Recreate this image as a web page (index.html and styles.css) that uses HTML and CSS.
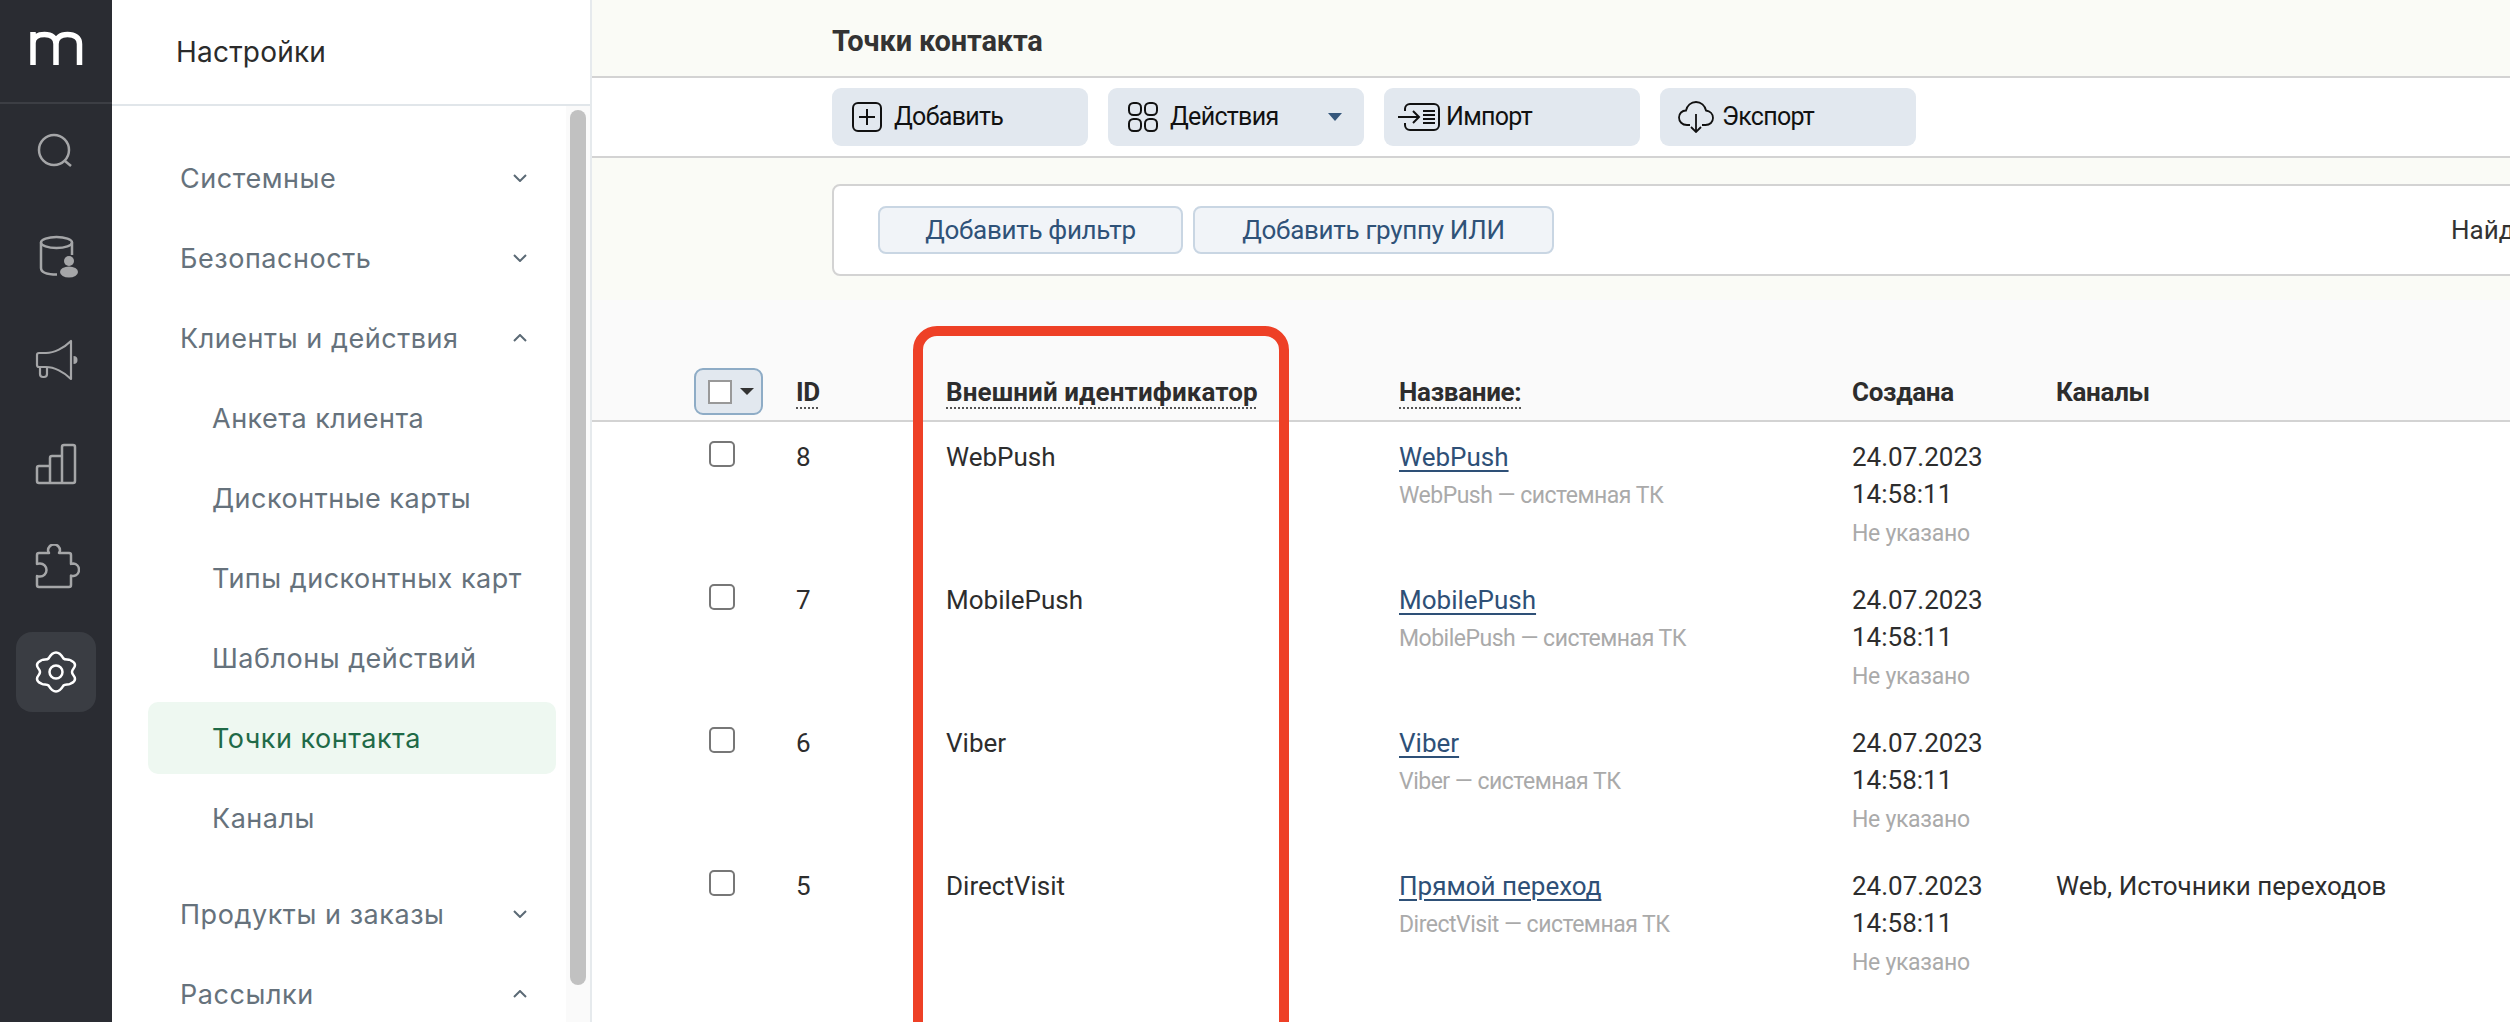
FILE: index.html
```html
<!DOCTYPE html>
<html lang="en">
<head>
    <meta charset="UTF-8">
    <meta name="viewport" content="width=device-width, initial-scale=1.0">
    <title>Точки контакта</title>
    <link rel="stylesheet" href="styles.css">
</head>
<body>
    <div class="app">
        <nav class="rail">
            <div class="rail-logo">
                <svg width="56" height="38" viewBox="0 0 56 38" fill="none" stroke="#fff" stroke-width="5.500">
                    <path d="M5 36V3M5 14C5 8 10 5.500 16.500 5.500C24 5.500 28 9 28 15V36M28 15C28 9 32 5.500 39.500 5.500C47 5.500 51.500 9 51.500 15V36"/>
                </svg>
            </div>
            <div class="rail-items">
                <div class="rail-item">
                    <svg width="48" height="48" viewBox="0 0 48 48" fill="none" stroke="#a5a6a8" stroke-width="2.500">
                        <circle cx="22" cy="22" r="15"/>
                        <path d="M33 33L39 38"/>
                    </svg>
                </div>
                <div class="rail-item">
                    <svg width="48" height="48" viewBox="0 0 48 48" fill="none" stroke="#a5a6a8" stroke-width="2.500">
                        <ellipse cx="24.500" cy="10.500" rx="15.500" ry="5.500"/>
                        <path d="M9 10.500V36C9 40 14 42.500 25 42.500M40 10.500V23"/>
                        <circle cx="37" cy="29" r="5" fill="#a5a6a8" stroke="none"/>
                        <ellipse cx="37" cy="40" rx="9" ry="5.500" fill="#a5a6a8" stroke="none"/>
                    </svg>
                </div>
                <div class="rail-item">
                    <svg width="48" height="48" viewBox="0 0 48 48" fill="none" stroke="#a5a6a8" stroke-width="2.200" stroke-linejoin="round">
                        <path d="M7 17H14C22 17 32 12 39 5V43C32 36 22 31 14 31H7A2 2 0 0 1 5 29V19A2 2 0 0 1 7 17Z"/>
                        <path d="M8 31V38A3 3 0 0 0 11 41H12A3 3 0 0 0 15 38V31"/>
                        <path d="M41.500 20A4 4 0 0 1 41.500 28Z" fill="#a5a6a8" stroke="none"/>
                    </svg>
                </div>
                <div class="rail-item">
                    <svg width="48" height="48" viewBox="0 0 48 48" fill="none" stroke="#a5a6a8" stroke-width="2.500">
                        <path d="M18 43V26H7A2 2 0 0 0 5 28V41A2 2 0 0 0 7 43H41A2 2 0 0 0 43 41V7A2 2 0 0 0 41 5H32A2 2 0 0 0 30 7V43M30 16H20A2 2 0 0 0 18 18V26"/>
                    </svg>
                </div>
                <div class="rail-item">
                    <svg width="48" height="48" viewBox="0 0 48 48" fill="none" stroke="#a5a6a8" stroke-width="2.500" stroke-linejoin="round">
                        <path d="M7 9H17C17 9 16 7 16 6.500A6 6 0 0 1 28 6.500C28 7 27 9 27 9H37A2 2 0 0 1 39 11V20C40 19.500 41 19.500 41.500 19.500A6.300 6.300 0 0 1 41.500 32C41 32 40 32 39 31.500V41A2 2 0 0 1 37 43H7A2 2 0 0 1 5 41V32C6 32.500 7 32.500 8 32.500A6.500 6.500 0 0 0 8 19.500C7 19.500 6 19.500 5 20V11A2 2 0 0 1 7 9Z"/>
                    </svg>
                </div>
                <div class="rail-item active">
                    <svg width="48" height="48" viewBox="0 0 48 48" fill="none" stroke="#fff" stroke-width="2.500">
                        <path d="M40 24C40 21 43 20.500 43 17C43 14 41 13.500 38 12C36 11 33 12 31.500 10.500C30 8 28 4.500 24 4.500C20 4.500 18 8 16.500 10.500C15 12 12 11 10 12C7 13.500 5 14 5 17C5 20.500 8 21 8 24C8 27 5 27.500 5 31C5 34 7 34.500 10 36C12 37 15 36 16.500 37.500C18 40 20 43.500 24 43.500C28 43.500 30 40 31.500 37.500C33 36 36 37 38 36C41 34.500 43 34 43 31C43 27.500 40 27 40 24Z"/>
                        <circle cx="24" cy="24" r="6.500"/>
                    </svg>
                </div>
            </div>
        </nav>

        <aside class="settings">
            <div class="settings-title">Настройки</div>
            <div class="settings-body">
                <div class="menu">
                    <div class="menu-section">Системные
                        <svg class="chevron" width="14" height="8" viewBox="0 0 14 8" fill="none" stroke="#5b6a75" stroke-width="2"><path d="M1 1L7 7L13 1"/></svg>
                    </div>
                    <div class="menu-section">Безопасность
                        <svg class="chevron" width="14" height="8" viewBox="0 0 14 8" fill="none" stroke="#5b6a75" stroke-width="2"><path d="M1 1L7 7L13 1"/></svg>
                    </div>
                    <div class="menu-section">Клиенты и действия
                        <svg class="chevron" width="14" height="8" viewBox="0 0 14 8" fill="none" stroke="#5b6a75" stroke-width="2"><path d="M1 7L7 1L13 7"/></svg>
                    </div>
                    <div class="submenu">
                        <div class="submenu-item">Анкета клиента</div>
                        <div class="submenu-item">Дисконтные карты</div>
                        <div class="submenu-item">Типы дисконтных карт</div>
                        <div class="submenu-item">Шаблоны действий</div>
                        <div class="submenu-item active">Точки контакта</div>
                        <div class="submenu-item">Каналы</div>
                    </div>
                    <div class="menu-section">Продукты и заказы
                        <svg class="chevron" width="14" height="8" viewBox="0 0 14 8" fill="none" stroke="#5b6a75" stroke-width="2"><path d="M1 1L7 7L13 1"/></svg>
                    </div>
                    <div class="menu-section">Рассылки
                        <svg class="chevron" width="14" height="8" viewBox="0 0 14 8" fill="none" stroke="#5b6a75" stroke-width="2"><path d="M1 7L7 1L13 7"/></svg>
                    </div>
                </div>
                <div class="scrollbar"><div class="scrollbar-thumb"></div></div>
            </div>
        </aside>

        <main class="main">
            <header class="page-title">Точки контакта</header>

            <div class="toolbar">
                <div class="tool-btn">
                    <svg width="30" height="30" viewBox="0 0 30 30" fill="none" stroke="#111" stroke-width="2">
                        <rect x="1" y="1" width="28" height="28" rx="5"/>
                        <path d="M15 7V23M7 15H23"/>
                    </svg>
                    <span>Добавить</span>
                </div>
                <div class="tool-btn">
                    <svg width="30" height="30" viewBox="0 0 30 30" fill="none" stroke="#111" stroke-width="2">
                        <rect x="1" y="1" width="12" height="12" rx="4.500"/>
                        <rect x="17" y="1" width="12" height="12" rx="4.500"/>
                        <rect x="1" y="17" width="12" height="12" rx="4.500"/>
                        <rect x="17" y="17" width="12" height="12" rx="4.500"/>
                    </svg>
                    <span>Действия</span>
                    <i class="caret"></i>
                </div>
                <div class="tool-btn import">
                    <svg width="42" height="28" viewBox="0 0 42 28" fill="none" stroke="#111" stroke-width="2">
                        <path d="M7 8V6A5 5 0 0 1 12 1H36A5 5 0 0 1 41 6V22A5 5 0 0 1 36 27H12A5 5 0 0 1 7 22V20"/>
                        <path d="M0 14H21M15 8L21 14L15 20"/>
                        <path d="M25 8H37M25 12H37M25 16H37M25 20H37"/>
                    </svg>
                    <span>Импорт</span>
                </div>
                <div class="tool-btn export">
                    <svg width="36" height="32" viewBox="0 0 36 32" fill="none" stroke="#111" stroke-width="1.800">
                        <path d="M12 24H9C4 24 1 20.500 1 16.500C1 12.500 4 9.500 8 9.500C9 4.500 13 1 18 1C23 1 27 4.500 28 9.500C32 10 35 13 35 17C35 21 32 24 27.500 24H24"/>
                        <path d="M18 13V31M13 26L18 31L23 26"/>
                    </svg>
                    <span>Экспорт</span>
                </div>
            </div>

            <div class="filters">
                <div class="filter-card">
                    <div class="filter-btn">Добавить фильтр</div>
                    <div class="filter-btn wide">Добавить группу ИЛИ</div>
                    <div class="found">Найдено</div>
                </div>
            </div>

            <div class="grid-row table-head">
                <div class="col-check">
                    <div class="select-box"><span class="select-check"></span><i class="select-caret"></i></div>
                </div>
                <div class="head-cell"><span class="dotted">ID</span></div>
                <div class="head-cell head-wide"><span class="dotted">Внешний идентификатор</span></div>
                <div class="head-cell"><span class="dotted">Название:</span></div>
                <div class="head-cell">Создана</div>
                <div class="head-cell">Каналы</div>
            </div>

            <div class="grid-row table-row">
                <div class="col-check"><span class="row-check"></span></div>
                <div>8</div>
                <div>WebPush</div>
                <div><a class="row-link">WebPush</a><div class="row-note">WebPush — системная ТК</div></div>
                <div>24.07.2023<br>14:58:11<div class="row-muted">Не указано</div></div>
                <div></div>
            </div>
            <div class="grid-row table-row">
                <div class="col-check"><span class="row-check"></span></div>
                <div>7</div>
                <div>MobilePush</div>
                <div><a class="row-link">MobilePush</a><div class="row-note">MobilePush — системная ТК</div></div>
                <div>24.07.2023<br>14:58:11<div class="row-muted">Не указано</div></div>
                <div></div>
            </div>
            <div class="grid-row table-row">
                <div class="col-check"><span class="row-check"></span></div>
                <div>6</div>
                <div>Viber</div>
                <div><a class="row-link">Viber</a><div class="row-note">Viber — системная ТК</div></div>
                <div>24.07.2023<br>14:58:11<div class="row-muted">Не указано</div></div>
                <div></div>
            </div>
            <div class="grid-row table-row">
                <div class="col-check"><span class="row-check"></span></div>
                <div>5</div>
                <div>DirectVisit</div>
                <div><a class="row-link">Прямой переход</a><div class="row-note">DirectVisit — системная ТК</div></div>
                <div>24.07.2023<br>14:58:11<div class="row-muted">Не указано</div></div>
                <div>Web, Источники переходов</div>
            </div>

            <div class="highlight-frame"></div>
        </main>
    </div>
</body>
</html>
```

FILE: styles.css
```css
body {
    margin: 0;
    overflow: hidden;
    background: #fff;
    font-family: "Roboto", sans-serif;
    font-size: 26px;
    color: #2d2d2d;
}
.app {
    display: flex;
    height: 100vh;
    overflow: hidden;
}

/* dark rail */
.rail {
    width: 112px;
    flex-shrink: 0;
    background: #2a2c32;
}
.rail-logo {
    height: 104px;
    display: flex;
    align-items: flex-start;
    justify-content: center;
    padding-top: 29px;
    box-sizing: border-box;
    border-bottom: 2px solid #3c3e44;
}
.rail-items {
    display: flex;
    flex-direction: column;
    gap: 24px;
    padding-top: 8px;
}
.rail-item {
    width: 80px;
    height: 80px;
    margin-left: 16px;
    display: flex;
    align-items: center;
    justify-content: center;
    border-radius: 16px;
}
.rail-item.active {
    background: #3a3d43;
}

/* settings menu */
.settings {
    width: 480px;
    flex-shrink: 0;
    box-sizing: border-box;
    border-right: 2px solid #e6eaed;
    display: flex;
    flex-direction: column;
    font-family: "Inter", sans-serif;
}
.settings-title {
    height: 104px;
    flex-shrink: 0;
    padding-left: 64px;
    line-height: 104px;
    font-size: 28px;
    letter-spacing: 0.2px;
    color: #2b2b2b;
    border-bottom: 2px solid #e1e6ea;
}
.settings-body {
    display: flex;
    flex: 1;
    min-height: 0;
}
.menu {
    flex: 1;
    padding-top: 32px;
}
.menu-section {
    height: 80px;
    display: flex;
    align-items: center;
    justify-content: space-between;
    padding: 0 39px 0 68px;
    font-size: 27px;
    letter-spacing: 0.55px;
    color: #66727c;
}
.submenu {
    display: flex;
    flex-direction: column;
    gap: 8px;
    margin: 4px 10px 20px 36px;
}
.submenu-item {
    height: 72px;
    line-height: 74px;
    padding-left: 64px;
    font-size: 27px;
    letter-spacing: 0.5px;
    color: #66727c;
    border-radius: 10px;
}
.submenu-item.active {
    background: #eef8f1;
    color: #1f6a47;
}
.scrollbar {
    width: 24px;
    flex-shrink: 0;
    background: #fafafa;
    padding: 4px 4px 0;
    box-sizing: border-box;
}
.scrollbar-thumb {
    height: 875px;
    background: #c1c1c1;
    border-radius: 8px;
}

/* main area */
.main {
    flex: 1;
    min-width: 0;
    position: relative;
}
.page-title {
    height: 76px;
    padding-left: 240px;
    line-height: 82px;
    font-weight: 700;
    font-size: 29px;
    letter-spacing: -0.15px;
    color: #333;
    background: #fafbf6;
    border-bottom: 2px solid #d3d3d3;
}
.toolbar {
    height: 80px;
    box-sizing: border-box;
    padding: 10px 0 0 240px;
    display: flex;
    gap: 20px;
    border-bottom: 2px solid #d3d3d3;
}
.tool-btn {
    width: 256px;
    height: 58px;
    display: flex;
    align-items: center;
    padding-left: 20px;
    box-sizing: border-box;
    gap: 12px;
    background: #e2e8ef;
    border-radius: 9px;
    font-size: 25px;
    letter-spacing: -0.7px;
    color: #111;
}
.tool-btn span {
    padding-bottom: 2px;
}
.tool-btn.import {
    padding-left: 14px;
    gap: 6px;
}
.tool-btn.export {
    padding-left: 18px;
    gap: 8px;
}
.caret {
    margin-left: auto;
    margin-right: 22px;
    border-left: 7px solid transparent;
    border-right: 7px solid transparent;
    border-top: 8px solid #35577c;
}
.filters {
    padding: 26px 0 24px 240px;
    background: #fafbf6;
}
.filter-card {
    height: 92px;
    box-sizing: border-box;
    margin-right: -20px;
    padding: 20px 0 0 44px;
    display: flex;
    align-items: flex-start;
    gap: 10px;
    background: #fff;
    border: 2px solid #d3d3d3;
    border-radius: 8px;
}
.filter-btn {
    width: 305px;
    height: 48px;
    box-sizing: border-box;
    line-height: 44px;
    text-align: center;
    background: #f1f4f8;
    border: 2px solid #c9d6e3;
    border-radius: 8px;
    letter-spacing: -0.3px;
    color: #2f5278;
}
.filter-btn.wide {
    width: 361px;
}
.found {
    margin-left: auto;
    width: 77px;
    white-space: nowrap;
    line-height: 48px;
    color: #333;
}

/* table */
.grid-row {
    display: grid;
    grid-template-columns: 204px 150px 453px 453px 204px 452px;
}
.table-head {
    height: 122px;
    box-sizing: border-box;
    align-items: end;
    padding-bottom: 5px;
    background: #fafafa;
    border-bottom: 2px solid #d3d3d3;
}
.head-cell {
    line-height: 37px;
    padding-bottom: 4px;
    font-weight: 700;
    letter-spacing: -0.3px;
    color: #2d2d2d;
    white-space: nowrap;
}
.head-cell.head-wide {
    letter-spacing: 0.1px;
}
.dotted {
    text-decoration: underline dotted 2px #555;
    text-underline-offset: 6px;
}
.col-check {
    padding-left: 117px;
}
.table-head .col-check {
    padding-left: 102px;
}
.select-box {
    width: 69px;
    height: 47px;
    box-sizing: border-box;
    display: flex;
    align-items: center;
    padding-left: 12px;
    gap: 8px;
    background: #e2e8ef;
    border: 2px solid #8eacc6;
    border-radius: 9px;
}
.select-check {
    width: 24px;
    height: 24px;
    box-sizing: border-box;
    background: #fff;
    border: 2px solid #999;
}
.select-caret {
    border-left: 7px solid transparent;
    border-right: 7px solid transparent;
    border-top: 7px solid #333;
}
.table-row {
    height: 143px;
    box-sizing: border-box;
    padding-top: 17px;
    line-height: 37px;
    white-space: nowrap;
}
.row-check {
    display: block;
    width: 26px;
    height: 26px;
    margin-top: 2px;
    box-sizing: border-box;
    border: 2px solid #777;
    border-radius: 5px;
}
.row-link {
    color: #2e5077;
    text-decoration: underline 2px;
    text-underline-offset: 4px;
}
.row-note {
    margin-top: 1px;
    font-size: 23px;
    letter-spacing: -0.5px;
    line-height: 37px;
    color: #aaa;
}
.row-muted {
    margin-top: 2px;
    font-size: 23px;
    letter-spacing: -0.3px;
    color: #aaa;
}
.highlight-frame {
    position: absolute;
    left: 321px;
    top: 326px;
    width: 376px;
    height: 800px;
    box-sizing: border-box;
    border: 10px solid #ee4026;
    border-radius: 24px;
    pointer-events: none;
}
```
